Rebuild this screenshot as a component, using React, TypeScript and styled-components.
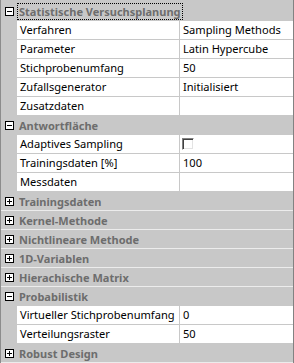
import styled, { createGlobalStyle } from "styled-components";

const GlobalStyle = createGlobalStyle`
  html, body {
    margin: 0;
    padding: 0;
    background: #f0f0f0;
  }
  body {
    font-family: "Noto Sans", "Open Sans", sans-serif;
  }
`;

const Grid = styled.div`
  width: 292px;
  height: 361px;
  padding-top: 2px;
  overflow: hidden;
  background: #c8c8c8;
  border-left: 1px solid #8c8c8c;
  border-right: 1px solid #828282;
  font-size: 11.1px;
  color: #000;
`;

const CategoryRow = styled.div<{ $line: string }>`
  display: flex;
  align-items: center;
  height: 18px;
  border-bottom: 1px solid ${(p) => p.$line};
`;

const Expander = styled.span`
  position: relative;
  box-sizing: border-box;
  width: 9px;
  height: 9px;
  margin: 0 6px 0 4px;
  border: 1px solid #000;
  background: #fff;
  flex-shrink: 0;
`;

const Bar = styled.span<{ $vertical?: boolean }>`
  position: absolute;
  background: #000;
  left: ${(p) => (p.$vertical ? "3px" : "1px")};
  top: ${(p) => (p.$vertical ? "1px" : "3px")};
  width: ${(p) => (p.$vertical ? "1px" : "5px")};
  height: ${(p) => (p.$vertical ? "5px" : "1px")};
`;

const CategoryLabel = styled.span<{ $focused?: boolean }>`
  font-weight: bold;
  font-size: 11px;
  color: #6d6d6d;
  line-height: 15px;
  padding: 0 1px;
  margin-left: -2px;
  outline: ${(p) => (p.$focused ? "1px dotted #000" : "none")};
  outline-offset: 0;
  white-space: nowrap;
`;

const PropRow = styled.div`
  display: flex;
  height: 18px;
  margin-left: 16px;
  border-bottom: 1px solid #c8c8c8;
  line-height: 18px;
`;

const NameCell = styled.div`
  width: 159px;
  padding-left: 3px;
  background: #fff;
  white-space: nowrap;
  overflow: hidden;
  border-right: 1px solid #c8c8c8;
`;

const ValueCell = styled.div`
  flex: 1;
  padding-left: 3px;
  background: #fff;
  white-space: nowrap;
  overflow: hidden;
  display: flex;
  align-items: center;
`;

const CheckBox = styled.span`
  box-sizing: border-box;
  width: 12px;
  height: 12px;
  margin-left: -1px;
  border-style: solid;
  border-width: 1px;
  border-color: #808080 #ffffff #ffffff #808080;
  box-shadow: inset 1px 1px 0 #404040, inset -1px -1px 0 #e3e3e3;
  background: #fff;
`;

type Prop = { name: string; value?: string; check?: boolean };
type Category = { title: string; open: boolean; props: Prop[]; focused?: boolean };

const categories: Category[] = [
  {
    title: "Statistische Versuchsplanung",
    open: true,
    focused: true,
    props: [
      { name: "Verfahren", value: "Sampling Methods" },
      { name: "Parameter", value: "Latin Hypercube" },
      { name: "Stichprobenumfang", value: "50" },
      { name: "Zufallsgenerator", value: "Initialisiert" },
      { name: "Zusatzdaten", value: "" },
    ],
  },
  {
    title: "Antwortfläche",
    open: true,
    props: [
      { name: "Adaptives Sampling", check: true },
      { name: "Trainingsdaten [%]", value: "100" },
      { name: "Messdaten", value: "" },
    ],
  },
  { title: "Trainingsdaten", open: false, props: [] },
  { title: "Kernel-Methode", open: false, props: [] },
  { title: "Nichtlineare Methode", open: false, props: [] },
  { title: "1D-Variablen", open: false, props: [] },
  { title: "Hierachische Matrix", open: false, props: [] },
  {
    title: "Probabilistik",
    open: true,
    props: [
      { name: "Virtueller Stichprobenumfang", value: "0" },
      { name: "Verteilungsraster", value: "50" },
    ],
  },
  { title: "Robust Design", open: false, props: [] },
];

const App = () => {
  return (
    <>
      <GlobalStyle />
      <Grid>
        {categories.map((cat) => (
          <div key={cat.title}>
            <CategoryRow $line={cat.open ? "#c8c8c8" : "#ececec"}>
              <Expander>
                <Bar />
                {!cat.open && <Bar $vertical />}
              </Expander>
              <CategoryLabel $focused={cat.focused}>{cat.title}</CategoryLabel>
            </CategoryRow>
            {cat.open &&
              cat.props.map((p) => (
                <PropRow key={p.name}>
                  <NameCell>{p.name}</NameCell>
                  <ValueCell>{p.check ? <CheckBox /> : p.value}</ValueCell>
                </PropRow>
              ))}
          </div>
        ))}
      </Grid>
    </>
  );
};

export default App;
